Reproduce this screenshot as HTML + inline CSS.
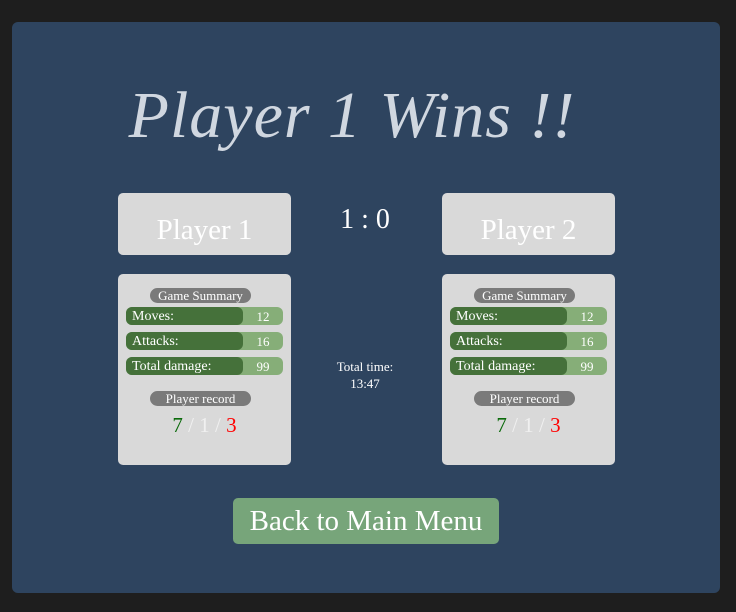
<!DOCTYPE html>
<html><head><meta charset="utf-8"><style>
*{margin:0;padding:0;box-sizing:border-box}
body{width:736px;height:612px;background:#1e1e1e;position:relative;overflow:hidden;font-family:"Liberation Serif",serif;color:#fff}
.panel{position:absolute;left:12px;top:22px;width:708px;height:571px;background:#2e445f;border-radius:6px}
.abs{position:absolute}
.title{left:0;top:78px;width:704px;text-align:center;white-space:nowrap;font-size:66px;font-style:italic;color:#d0d7e0;font-weight:normal;letter-spacing:1px}
.name{background:#d9d9d9;border-radius:5px;height:62px;width:173px;top:193px;font-size:29px;text-align:center;line-height:74px}
.box{background:#d9d9d9;border-radius:5px;height:191px;width:173px;top:274px}
.pill{position:absolute;left:32px;width:101px;height:15px;background:#7a7a7a;border-radius:8px;font-size:13px;text-align:center;line-height:15px}
.row{position:absolute;left:8px;width:157px;height:18px;background:#86ae78;border-radius:6px;font-size:14px;line-height:20px}
.row .d{position:absolute;left:0;top:0;width:117px;height:18px;background:#45713a;border-radius:6px;padding-left:6px}
.row .v{position:absolute;left:117px;width:40px;text-align:center;font-size:13px}
.rec{position:absolute;left:0;width:173px;top:139px;text-align:center;font-size:21px;color:#fff}
.rec .s{color:#f0f0f0}
.score{left:300px;top:204px;width:130px;text-align:center;font-size:28px}
.time{left:300px;top:358px;width:130px;text-align:center;font-size:13px;line-height:17px}
.btn{left:233px;top:498px;width:266px;height:46px;background:#77a57a;border-radius:5px;font-size:29px;text-align:center;line-height:46px}
</style></head><body>
<div class="panel"></div>
<div class="abs title">Player 1 Wins !!</div>
<div class="abs name" style="left:118px">Player 1</div>
<div class="abs name" style="left:442px">Player 2</div>
<div class="abs score">1 : 0</div>
<div class="abs time">Total time:<br>13:47</div>
<div class="abs box" style="left:118px">
<div class="pill" style="top:14px">Game Summary</div>
<div class="row" style="top:33px"><div class="d">Moves:</div><div class="v">12</div></div>
<div class="row" style="top:58px"><div class="d">Attacks:</div><div class="v">16</div></div>
<div class="row" style="top:83px"><div class="d">Total damage:</div><div class="v">99</div></div>
<div class="pill" style="top:117px">Player record</div>
<div class="rec"><span style="color:#0a6a0a">7</span><span class="s"> / 1 / </span><span style="color:#f00">3</span></div>
</div>
<div class="abs box" style="left:442px">
<div class="pill" style="top:14px">Game Summary</div>
<div class="row" style="top:33px"><div class="d">Moves:</div><div class="v">12</div></div>
<div class="row" style="top:58px"><div class="d">Attacks:</div><div class="v">16</div></div>
<div class="row" style="top:83px"><div class="d">Total damage:</div><div class="v">99</div></div>
<div class="pill" style="top:117px">Player record</div>
<div class="rec"><span style="color:#0a6a0a">7</span><span class="s"> / 1 / </span><span style="color:#f00">3</span></div>
</div>
<div class="abs btn">Back to Main Menu</div>
</body></html>
